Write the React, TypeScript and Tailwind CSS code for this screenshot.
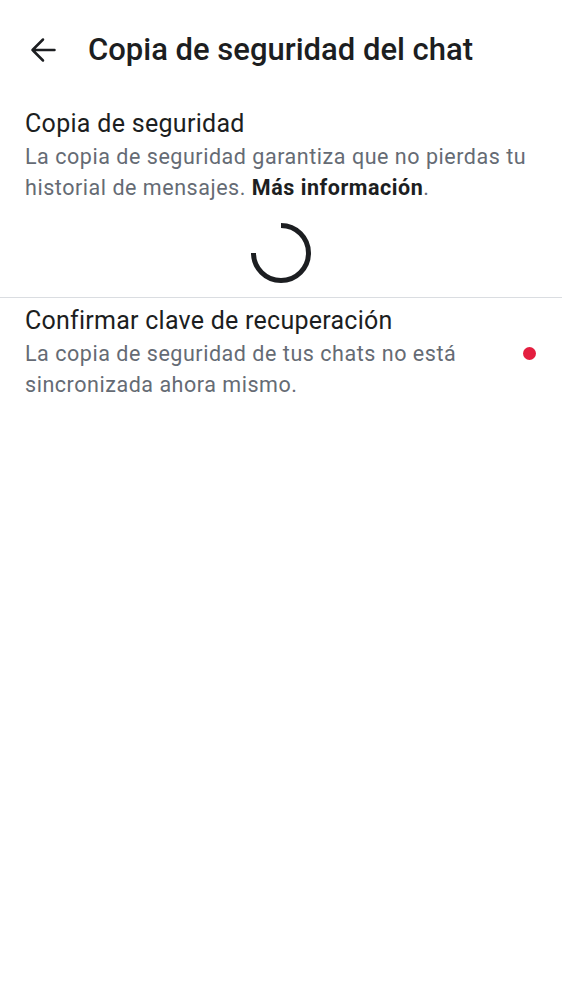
function BackArrow() {
  return (
    <svg width="28" height="28" viewBox="0 0 28 28" fill="none">
      <path
        d="M2.5 14H24.5M13 3.5L2.5 14L13 24.5"
        stroke="#1c1e21"
        strokeWidth="2.5"
        strokeLinecap="round"
        strokeLinejoin="round"
      />
    </svg>
  );
}

function Spinner() {
  // 270° arc, open from 9 o'clock to 12 o'clock
  return (
    <svg width="62" height="62" viewBox="0 0 62 62" fill="none">
      <path
        d="M31 3.5 A27.5 27.5 0 1 1 3.5 31"
        stroke="#1c1e21"
        strokeWidth="5"
      />
    </svg>
  );
}

export default function App() {
  return (
    <div className="min-h-screen bg-white font-['Roboto',sans-serif] text-[#1c1e21]">
      <header className="flex h-[100px] items-center">
        <button className="flex w-[88px] items-center pl-[30px]">
          <BackArrow />
        </button>
        <h1 className="text-[31px] leading-[36px] font-medium">Copia de seguridad del chat</h1>
      </header>

      <section className="px-[25px] pt-[9px]">
        <h2 className="text-[25px] leading-[30px] tracking-[0.012em]">Copia de seguridad</h2>
        <p className="mt-[2px] text-[21.5px] leading-[31px] tracking-[0.025em] text-[#656b74]">
          La copia de seguridad garantiza que no pierdas tu historial de mensajes.{" "}
          <span className="font-bold text-[#1c1e21]">Más información</span>.
        </p>
        <div className="flex justify-center pt-[19px] pb-[13px]">
          <Spinner />
        </div>
      </section>

      <div className="h-px bg-[#dadde1]" />

      <section className="flex items-center pt-[8px] pr-[26px] pl-[25px]">
        <div className="flex-1">
          <h2 className="text-[25px] leading-[30px] tracking-[0.01em]">Confirmar clave de recuperación</h2>
          <p className="mt-[2px] pr-[40px] text-[21.5px] leading-[31px] tracking-[0.025em] text-[#656b74]">
            La copia de seguridad de tus chats no está sincronizada ahora mismo.
          </p>
        </div>
        <span className="h-[13px] w-[13px] rounded-full bg-[#e41e3f]" />
      </section>
    </div>
  );
}
